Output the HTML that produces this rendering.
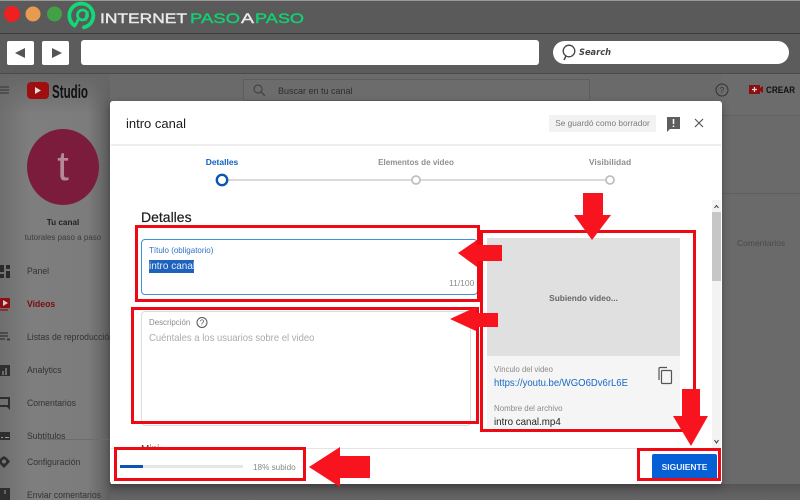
<!DOCTYPE html>
<html><head><meta charset="utf-8"><style>
*{box-sizing:border-box}
html,body{margin:0;padding:0;width:800px;height:500px;overflow:hidden;background:#6a6a6a;font-family:"Liberation Sans",sans-serif}
#w{position:absolute;left:0;top:0;width:800px;height:500px;overflow:hidden;filter:blur(.25px)}
.a{position:absolute;white-space:nowrap}
.s{transform-origin:0 50%}
.r{position:absolute;border:3px solid #ee0a14}
.nav{position:absolute;left:27px;font-size:9px;color:#333;line-height:12px;white-space:nowrap;transform:scaleX(.96);transform-origin:0 50%}
</style></head><body><div id="w">
<div class="a" style="left:0;top:0;width:110px;height:500px;background:linear-gradient(90deg,#6e6e6e 0,#7e7e7e 30px,#7c7c7c 88px,#5e5e5e 110px)"></div>
<div class="a" style="left:110px;top:74px;width:690px;height:426px;background:#6a6a6a"></div>
<div class="a" style="left:0;top:74px;width:110px;height:40px;background:linear-gradient(#666,rgba(110,110,110,0))"></div>
<div class="a" style="left:110px;top:484px;width:690px;height:16px;background:linear-gradient(#565656,#656565)"></div>
<div class="a" style="left:0;top:0;width:800px;height:33px;background:#5a5a5a;border-top:1px solid #999"></div>
<div class="a" style="left:0;top:33px;width:800px;height:41px;background:#5c5c5c;border-top:1px solid #3e3e3e;border-bottom:1px solid #4a4a4a"></div>
<div class="a" style="left:243px;top:79px;width:347px;height:22px;background:#6c6c6c;border:1px solid #5e5e5e"></div>
<div class="a" style="left:722px;top:74px;width:78px;height:42px;background:#6c6c6c;border-bottom:1px solid #626262"></div>

<svg class="a" style="left:0;top:0" width="800" height="110" viewBox="0 0 800 110">
<circle cx="12" cy="14" r="8" fill="#f02020"/>
<circle cx="33" cy="14" r="7.500" fill="#e89a50"/>
<circle cx="54.500" cy="14" r="7.500" fill="#43a047"/>
<path d="M74.500 25.500A12 12 0 1 1 84 27.300" fill="none" stroke="#12d878" stroke-width="3.800" stroke-linecap="round"/>
<circle cx="82.500" cy="15" r="5" fill="none" stroke="#12d878" stroke-width="2.800"/>
<path d="M78.500 19L75.500 25M87.500 11L85.500 20.500" fill="none" stroke="#12d878" stroke-width="2.800"/>
<g font-family="Liberation Sans" font-size="14" stroke-width=".4">
<text x="100" y="23" fill="#e8e8e8" stroke="#e8e8e8" textLength="87" lengthAdjust="spacingAndGlyphs">INTERNET</text>
<text x="190" y="23" fill="#12d070" stroke="#12d070" textLength="50" lengthAdjust="spacingAndGlyphs">PASO</text>
<text x="241" y="23" fill="#e8e8e8" stroke="#e8e8e8" textLength="13" lengthAdjust="spacingAndGlyphs">A</text>
<text x="255" y="23" fill="#12d070" stroke="#12d070" textLength="49" lengthAdjust="spacingAndGlyphs">PASO</text>
</g>
<rect x="7" y="41" width="27" height="24" rx="2" fill="#fff"/>
<path d="M15 53 L25 48 V58 Z" fill="#555"/>
<rect x="42" y="41" width="27" height="24" rx="2" fill="#fff"/>
<path d="M62 53 L52 48 V58 Z" fill="#555"/>
<rect x="81" y="40" width="458" height="25" rx="3" fill="#fff"/>
<rect x="553" y="41" width="236" height="23" rx="11.500" fill="#fff"/>
<circle cx="569" cy="51" r="5.800" fill="none" stroke="#444" stroke-width="1.300"/>
<path d="M566 56 L564 60" stroke="#444" stroke-width="1.500"/>
<text x="579" y="55" font-family="DejaVu Sans" font-style="italic" font-weight="bold" font-size="8.500" fill="#444" textLength="32" lengthAdjust="spacingAndGlyphs">Search</text>
<path d="M0 87H9M0 90H9M0 93H9" stroke="#333" stroke-width="1"/>
<rect x="27" y="82" width="22" height="17" rx="4" fill="#a00f10"/>
<path d="M35 87 L41 90.500 L35 94 Z" fill="#ddd"/>
<text x="52" y="98" font-family="Liberation Sans" font-weight="bold" font-size="18" fill="#111" textLength="36" lengthAdjust="spacingAndGlyphs">Studio</text>
<circle cx="258" cy="89" r="4" fill="none" stroke="#444" stroke-width="1.200"/>
<path d="M261 92 L265 96" stroke="#444" stroke-width="1.400"/>
<text x="278" y="94" font-family="Liberation Sans" font-size="9" fill="#2e2e2e">Buscar en tu canal</text>
<circle cx="722" cy="90" r="6" fill="none" stroke="#333" stroke-width="1"/>
<text x="722" y="93" text-anchor="middle" font-family="Liberation Sans" font-size="8" fill="#333">?</text>
<rect x="749" y="85" width="11" height="9" fill="#8c0f12"/>
<path d="M760 88 L763 86 V93 L760 91Z" fill="#8c0f12"/>
<path d="M752 89.500H757M754.500 87V92" stroke="#ddd" stroke-width="1.200"/>
<text x="766" y="93" font-family="Liberation Sans" font-weight="bold" font-size="9.500" fill="#111" textLength="29" lengthAdjust="spacingAndGlyphs">CREAR</text>
</svg>

<!-- sidebar -->
<div class="a" style="left:27px;top:129px;width:72px;height:76px;border-radius:50%;background:#7c1c3c;color:#b58a98;font-size:42px;line-height:74px;text-align:center">t</div>
<div class="a" style="left:0;top:218px;width:126px;text-align:center;font-size:8.200px;font-weight:bold;color:#222">Tu canal</div>
<div class="a" style="left:0;top:233px;width:126px;text-align:center;font-size:8px;color:#3c3c3c">tutorales paso a paso</div>
<svg class="a" style="left:0;top:0" width="27" height="500" viewBox="0 0 27 500">
<path d="M0 265H4V272H0ZM6 265H10V269H6ZM6 271H10V278H6ZM0 274H4V278H0Z" fill="#2a2a2a"/>
<rect x="0" y="298" width="10" height="10" rx="1" fill="#8e0f12"/><path d="M3 300L8 303L3 306Z" fill="#d0d0d0"/><path d="M0 310H8" stroke="#8e0f12" stroke-width="1.200"/>
<path d="M0 333H8M0 336H8M0 339H5" stroke="#333" stroke-width="1.200"/><path d="M7 339.500H10" stroke="#333" stroke-width="1.800"/>
<rect x="0" y="365" width="10" height="11" fill="#2e2e2e"/><path d="M3 371V375M6 368V375" stroke="#aaa"/>
<path d="M0 397H10V410L7 407H0ZM0 399V405H8V399Z" fill="#2e2e2e" fill-rule="evenodd"/>
<rect x="0" y="432" width="10" height="8" fill="#2e2e2e"/><path d="M1 437.500H3M5 437.500H9" stroke="#999"/>
<path d="M4 456L7 458L10 461.500L7 465L4 468L1 465L-2 461.500L1 458Z" fill="#2e2e2e"/><circle cx="4" cy="461.500" r="2" fill="#777"/>
<rect x="0" y="488" width="10" height="12" fill="#2e2e2e"/><path d="M5 490V494" stroke="#999"/>
</svg>
<div class="nav" style="top:265px">Panel</div>
<div class="nav" style="top:298px;color:#7a0c12;font-weight:bold">Videos</div>
<div class="nav" style="top:331px">Listas de reproducción</div>
<div class="nav" style="top:364px">Analytics</div>
<div class="nav" style="top:397px">Comentarios</div>
<div class="nav" style="top:430px">Subtítulos</div>
<div class="a" style="left:40px;top:439px;width:70px;height:1px;background:#6c6c6c"></div>
<div class="nav" style="top:456px">Configuración</div>
<div class="nav" style="top:489px">Enviar comentarios</div>
<div class="a" style="left:737px;top:238px;font-size:8.500px;color:#4a4a4a">Comentarios</div>
<div class="a" style="left:722px;top:193px;width:78px;height:1px;background:#5f5f5f"></div>

<!-- modal -->
<div class="a" style="left:110px;top:101px;width:612px;height:383px;background:#fff;border-radius:3px;box-shadow:0 3px 8px rgba(0,0,0,.3)"></div>
<div class="a" style="left:126px;top:115px;font-size:13px;line-height:17px;color:#1c1c1c">intro canal</div>
<div class="a" style="left:549px;top:115px;width:107px;height:17px;background:#f2f2f2;font-size:8.300px;line-height:17px;text-align:center;color:#7c7c7c">Se guardó como borrador</div>
<svg class="a" style="left:660px;top:112px" width="50" height="22" viewBox="0 0 50 22">
<path d="M7 5H20V17H10L7 20Z" fill="#5e5e5e"/><path d="M13.500 7V12M13.500 13.500V15" stroke="#fff" stroke-width="1.500"/>
<path d="M35 7L43 15M43 7L35 15" stroke="#555" stroke-width="1.200"/>
</svg>
<div class="a" style="left:111px;top:144px;width:610px;height:2px;background:#eee"></div>

<!-- stepper -->
<div class="a" style="left:182px;top:156px;width:80px;text-align:center;font-size:8.500px;line-height:12px;font-weight:bold;color:#0f62c0">Detalles</div>
<div class="a" style="left:366px;top:156px;width:100px;text-align:center;font-size:8.500px;line-height:12px;font-weight:bold;color:#8f8f8f;transform:scaleX(.95)">Elementos de video</div>
<div class="a" style="left:570px;top:156px;width:80px;text-align:center;font-size:8.500px;line-height:12px;font-weight:bold;color:#8f8f8f">Visibilidad</div>
<svg class="a" style="left:210px;top:170px" width="412" height="20" viewBox="0 0 412 20">
<path d="M16 10H405" stroke="#c4c4c4" stroke-width="1.300"/>
<circle cx="12" cy="10" r="5.200" fill="#fff" stroke="#0a55b4" stroke-width="2.400"/>
<circle cx="206" cy="10" r="4" fill="#fff" stroke="#c0c0c0" stroke-width="1.800"/>
<circle cx="400" cy="10" r="4" fill="#fff" stroke="#c0c0c0" stroke-width="1.800"/>
</svg>

<div class="a" style="left:141px;top:208px;font-size:14px;line-height:18px;color:#1c1c1c;-webkit-text-stroke:.2px #1c1c1c">Detalles</div>

<!-- title -->
<div class="a" style="left:141px;top:239px;width:337px;height:56px;border:1px solid #3e93d8;border-radius:4px"></div>
<div class="a s" style="left:149px;top:245px;font-size:8.500px;line-height:11px;color:#2f72c4;transform:scaleX(.94)">Título (obligatorio)</div>
<div class="a" style="left:149px;top:260px;width:45px;height:13px;background:#1d62bd;color:#e6eefa;font-size:10px;line-height:13px;overflow:hidden">intro canal</div>
<div class="a" style="left:449px;top:278px;font-size:8.500px;line-height:11px;color:#8c8c8c">11/100</div>

<!-- description -->
<div class="a" style="left:141px;top:311px;width:330px;height:115px;border:1px solid #ddd;border-radius:4px"></div>
<div class="a s" style="left:149px;top:317px;font-size:8.500px;line-height:11px;color:#8a8a8a;transform:scaleX(.93)">Descripción</div>
<svg class="a" style="left:195px;top:316px" width="14" height="13" viewBox="0 0 14 13"><circle cx="7" cy="6.500" r="5" fill="none" stroke="#555"/><text x="7" y="9.500" text-anchor="middle" font-family="Liberation Sans" font-size="8" fill="#555">?</text></svg>
<div class="a s" style="left:149px;top:332px;font-size:10.200px;line-height:14px;color:#ababab;transform:scaleX(.93)">Cuéntales a los usuarios sobre el video</div>

<!-- video panel -->
<div class="a" style="left:487px;top:238px;width:193px;height:118px;background:#e0e0e0;font-size:8.300px;font-weight:bold;line-height:12px;text-align:center;color:#666;padding-top:54px">Subiendo video...</div>
<div class="a" style="left:487px;top:356px;width:193px;height:72px;background:#f5f5f5"></div>
<div class="a s" style="left:494px;top:364px;font-size:8.500px;line-height:11px;color:#8a8a8a;transform:scaleX(.91)">Vínculo del video</div>
<div class="a s" style="left:494px;top:377px;font-size:10.300px;line-height:14px;color:#1669c4;transform:scaleX(.925)">https://youtu.be/WGO6Dv6rL6E</div>
<div class="a s" style="left:494px;top:403px;font-size:8.500px;line-height:11px;color:#8a8a8a;transform:scaleX(.93)">Nombre del archivo</div>
<div class="a s" style="left:494px;top:415px;font-size:10.500px;line-height:14px;color:#222;transform:scaleX(.93)">intro canal.mp4</div>
<svg class="a" style="left:655px;top:366px" width="18" height="20" viewBox="0 0 18 20"><path d="M4 14V2.500A1 1 0 0 1 5 1.500H12" fill="none" stroke="#555" stroke-width="1.200"/><rect x="6.500" y="4.500" width="10" height="13" rx="1" fill="none" stroke="#555" stroke-width="1.200"/></svg>

<!-- scrollbar -->
<div class="a" style="left:712px;top:200px;width:9px;height:248px;background:#f3f3f3"></div>
<div class="a" style="left:712px;top:212px;width:9px;height:69px;background:#c6c6c6"></div>
<svg class="a" style="left:712px;top:202px" width="9" height="246" viewBox="0 0 9 246"><path d="M2.500 6L4.500 3.500L6.500 6M2.500 238L4.500 241L6.500 238" fill="none" stroke="#333" stroke-width="1"/></svg>

<!-- clipped next-section heading -->
<div class="a" style="left:141px;top:444px;width:20px;height:4px;overflow:hidden;font-size:10px;line-height:12px;color:#333">Miniatura</div>

<!-- footer -->
<div class="a" style="left:111px;top:448px;width:610px;height:36px;background:#fff;border-top:1px solid #e4e4e4"></div>
<div class="a" style="left:120px;top:465px;width:123px;height:3px;background:#e6e6e6"></div>
<div class="a" style="left:120px;top:465px;width:23px;height:3px;background:#0a55b4"></div>
<div class="a s" style="left:253px;top:461px;font-size:8.500px;line-height:12px;color:#888;transform:scaleX(.96)">18% subido</div>
<div class="a" style="left:652px;top:454px;width:65px;height:26px;background:#065fd4;color:#eaf2ff;font-size:8.500px;font-weight:bold;line-height:26px;text-align:center;border-radius:2px 2px 0 0">SIGUIENTE</div>

<!-- red boxes -->
<div class="r" style="left:135px;top:225px;width:345px;height:77px"></div>
<div class="r" style="left:131px;top:307px;width:348px;height:117px"></div>
<div class="r" style="left:480px;top:230px;width:216px;height:202px"></div>
<div class="r" style="left:114px;top:447px;width:192px;height:34px"></div>
<div class="r" style="left:637px;top:448px;width:84px;height:33px"></div>

<svg class="a" style="left:0;top:0" width="800" height="500" viewBox="0 0 800 500" fill="#f7141e">
<path d="M458 253 L477 240 V245 H502 V261 H477 V267 Z"/>
<path d="M450 319 L476 307 V313 H498 V327 H476 V331 Z"/>
<path d="M583 193 H603 V215 H611 L592 240 L574 215 H583 Z"/>
<path d="M682 389 H700 V416 H708 L691 446 L673 416 H682 Z"/>
<path d="M309 467 L340 447 V456 H370 V478 H340 V487 Z"/>
</svg>
</div></body></html>
